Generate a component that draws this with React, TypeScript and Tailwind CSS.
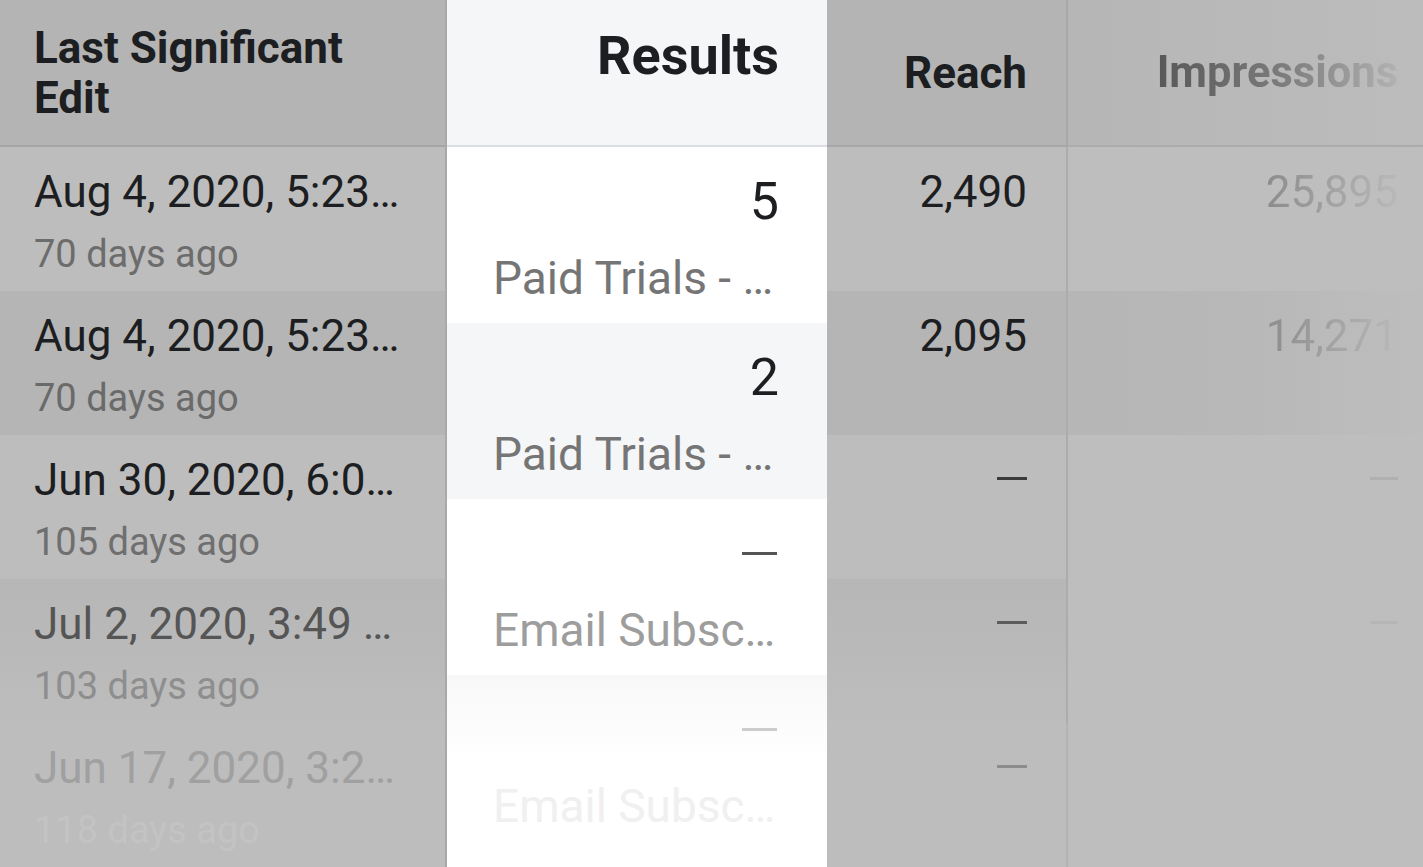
import React from 'react';

type EditRow = { date: string; ago: string; bg: string; dateColor: string; agoColor: string };

const editRows: EditRow[] = [
  { date: 'Aug 4, 2020, 5:23…', ago: '70 days ago', bg: 'bg-[#bdbdbd]', dateColor: 'text-[#1c1e21]', agoColor: 'text-[#6c6c6c]' },
  { date: 'Aug 4, 2020, 5:23…', ago: '70 days ago', bg: 'bg-[#b5b5b5]', dateColor: 'text-[#1c1e21]', agoColor: 'text-[#6a6a6a]' },
  { date: 'Jun 30, 2020, 6:0…', ago: '105 days ago', bg: 'bg-[#bdbdbd]', dateColor: 'text-[#1c1e21]', agoColor: 'text-[#6f6f6f]' },
  { date: 'Jul 2, 2020, 3:49 …', ago: '103 days ago', bg: 'bg-gradient-to-b from-[#b7b7b7] via-[#b9b9b9] to-[#bdbdbd]', dateColor: 'text-[#555555]', agoColor: 'text-[#8e8e8e]' },
  { date: 'Jun 17, 2020, 3:2…', ago: '118 days ago', bg: 'bg-[#bdbdbd]', dateColor: 'text-[#a0a0a0]', agoColor: 'text-[#c3c3c3]' },
];

type ResultRow = { value?: string; label: string; bg: string; labelColor: string; dashColor?: string };

const resultRows: ResultRow[] = [
  { value: '5', label: 'Paid Trials - …', bg: 'bg-white', labelColor: 'text-[#757575]' },
  { value: '2', label: 'Paid Trials - …', bg: 'bg-[#f5f6f7]', labelColor: 'text-[#757575]' },
  { label: 'Email Subsc…', bg: 'bg-white', labelColor: 'text-[#9d9d9d]', dashColor: 'bg-[#555555]' },
  { label: 'Email Subsc…', bg: 'bg-gradient-to-b from-[#f8f8f9] via-white to-white', labelColor: 'text-[#f0f0f0]', dashColor: 'bg-[#cccccc]' },
];

type NumRow = { value?: string; bg: string; dash: string };

const reachRows: NumRow[] = [
  { value: '2,490', bg: 'bg-[#bdbdbd]', dash: '' },
  { value: '2,095', bg: 'bg-[#b5b5b5]', dash: '' },
  { bg: 'bg-[#bdbdbd]', dash: 'bg-[#3a3a3a]' },
  { bg: 'bg-gradient-to-b from-[#b7b7b7] via-[#b9b9b9] to-[#bdbdbd]', dash: 'bg-[#5c5c5c]' },
  { bg: 'bg-[#bdbdbd]', dash: 'bg-[#8c8c8c]' },
];

const impressionRows: NumRow[] = [
  { value: '25,895', bg: 'bg-[#bebebe]', dash: '' },
  { value: '14,271', bg: 'bg-gradient-to-r from-[#b6b6b6] via-[#b8b8b8] to-[#bebebe]', dash: '' },
  { bg: 'bg-[#bebebe]', dash: 'bg-[#b0b0b0]' },
  { bg: 'bg-[#bebebe]', dash: 'bg-[#b6b6b6]' },
  { bg: 'bg-[#bebebe]', dash: '' },
];

const App: React.FC = () => {
  return (
    <div className="flex h-[867px] w-full overflow-hidden bg-[#bdbdbd] font-['Roboto',sans-serif]">
      {/* Last Significant Edit */}
      <div className="flex w-[447px] shrink-0 flex-col border-r-2 border-[#a9a9a9]">
        <div className="h-[147px] shrink-0 border-b-2 border-[#a6a6a6] bg-[#b4b4b4] pl-[34px] pr-[40px] pt-[23px]">
          <h2 className="text-[44px] font-bold leading-[50px] text-[#1c1e21]">Last Significant Edit</h2>
        </div>
        {editRows.map((row, i) => (
          <div key={i} className={`h-[144px] shrink-0 pl-[34px] pr-[30px] pt-[20px] ${row.bg}`}>
            <div className={`truncate text-[44px] leading-[50px] ${row.dateColor}`}>{row.date}</div>
            <div className={`mt-[12px] truncate text-[38px] leading-[50px] ${row.agoColor}`}>{row.ago}</div>
          </div>
        ))}
      </div>

      {/* Results (highlighted) */}
      <div className="flex w-[380px] shrink-0 flex-col bg-white">
        <div className="h-[147px] shrink-0 border-b-2 border-[#dadde1] bg-[#f5f6f7] pr-[48px] pt-[28px] text-right">
          <h2 className="text-[54px] font-bold leading-[55px] text-[#1c1e21]">Results</h2>
        </div>
        {resultRows.map((row, i) => (
          <div key={i} className={`h-[176px] shrink-0 pl-[46px] pr-[48px] pt-[25px] ${row.bg}`}>
            {row.value ? (
              <div className="text-right text-[52px] leading-[60px] text-[#1c1e21]">{row.value}</div>
            ) : (
              <div className="flex h-[60px] items-center justify-end pb-[2px] pr-[2px]">
                <div className={`h-[3px] w-[35px] ${row.dashColor}`} />
              </div>
            )}
            <div className={`mt-[18px] truncate text-left text-[46px] leading-[56px] ${row.labelColor}`}>{row.label}</div>
          </div>
        ))}
      </div>

      {/* Reach */}
      <div className="flex w-[241px] shrink-0 flex-col">
        <div className="h-[147px] shrink-0 border-b-2 border-r-2 border-[#a8a8a8] bg-[#b4b4b4] pr-[39px] pt-[48px] text-right">
          <h2 className="text-[44px] font-bold leading-[50px] text-[#1c1e21]">Reach</h2>
        </div>
        {reachRows.map((row, i) => (
          <div
            key={i}
            className={`h-[144px] shrink-0 border-r-2 pr-[39px] pt-[20px] text-right ${row.bg} ${i === 4 ? 'border-[#b3b3b3]' : 'border-[#acacac]'}`}
          >
            {row.value ? (
              <div className="text-[44px] leading-[50px] text-[#1c1e21]">{row.value}</div>
            ) : (
              <div className="flex justify-end pt-[22px]">
                <div className={`h-[3px] w-[30px] ${row.dash}`} />
              </div>
            )}
          </div>
        ))}
      </div>

      {/* Impressions (fading out) */}
      <div className="flex w-[370px] shrink-0 flex-col">
        <div className="h-[147px] shrink-0 border-b-2 border-[#acacac] bg-gradient-to-r from-[#b6b6b6] to-[#bcbcbc] pr-[40px] pt-[48px] text-right">
          <h2 className="inline-block bg-gradient-to-r from-[#585858] via-[#7a7a7a] to-[#b2b2b2] bg-clip-text text-[43.5px] font-bold leading-[50px] text-transparent">
            Impressions
          </h2>
        </div>
        {impressionRows.map((row, i) => (
          <div key={i} className={`h-[144px] shrink-0 pr-[40px] pt-[20px] text-right ${row.bg}`}>
            {row.value ? (
              <div className="inline-block bg-gradient-to-r from-[#8c8c8c] to-[#b9b9b9] bg-clip-text text-[44px] leading-[50px] text-transparent">
                {row.value}
              </div>
            ) : row.dash ? (
              <div className="flex justify-end pt-[22px]">
                <div className={`h-[3px] w-[28px] ${row.dash}`} />
              </div>
            ) : null}
          </div>
        ))}
      </div>
    </div>
  );
};

export default App;
